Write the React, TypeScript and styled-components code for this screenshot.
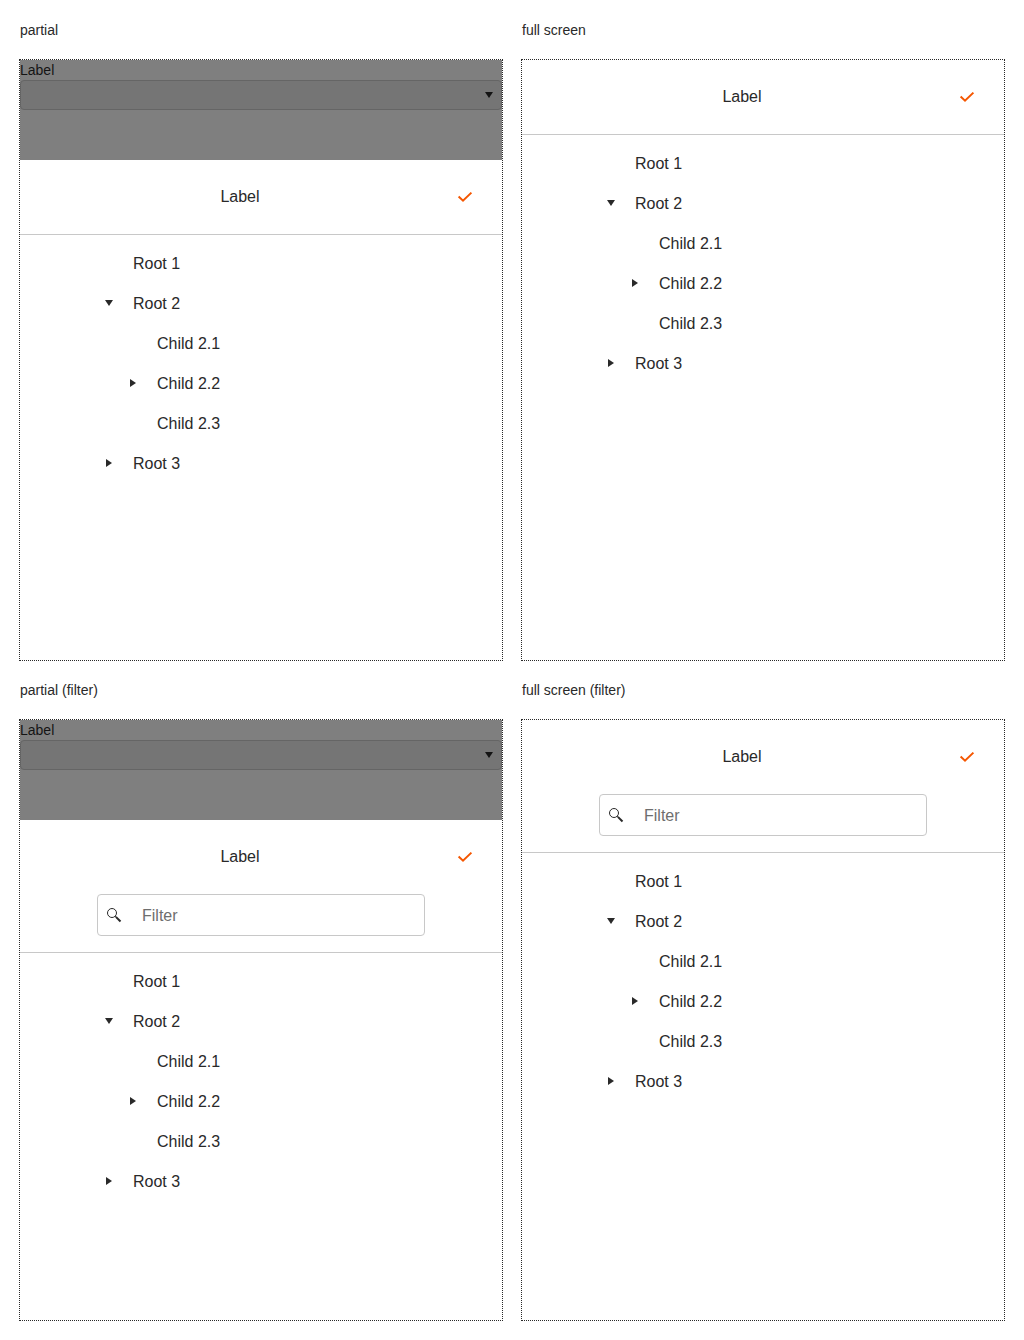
import React from "react";
import styled, { createGlobalStyle } from "styled-components";

const Global = createGlobalStyle`
  * { box-sizing: border-box; }
  body { margin: 0; background: #fff; color: #292929; font-family: "Liberation Sans", Arial, sans-serif; font-size: 14px; line-height: 20px; }
`;

const Page = styled.main`
  display: grid;
  grid-template-columns: 482px 482px;
  column-gap: 20px;
  padding: 20px;
`;

const Story = styled.section`
  height: 660px;
`;

const Title = styled.div`
  height: 20px;
  margin-bottom: 20px;
`;

const Frame = styled.div`
  display: flex;
  flex-direction: column;
  height: 600px;
  outline: 1px dotted #292929;
`;

const Backdrop = styled.div`
  height: 100px;
  flex: none;
  background: #7f7f7f;
  color: #141414;
`;

const Picker = styled.div`
  display: flex;
  align-items: center;
  justify-content: flex-end;
  height: 30px;
  padding-right: 8px;
  border: 1px solid #656565;
  border-radius: 4px;
  background: #757575;
`;

const Header = styled.header`
  flex: none;
  border-bottom: 1px solid #c8c8c8;
`;

const TitleBar = styled.div`
  display: grid;
  grid-template-columns: 1fr 42px;
  align-items: center;
  height: 74px;
  padding: 0 16px;
  font-size: 16px;
  text-align: center;
`;

const Confirm = styled.button`
  display: flex;
  align-items: center;
  justify-content: center;
  width: 42px;
  height: 42px;
  padding: 0;
  border: 0;
  background: none;
`;

const Heading = styled.span`
  line-height: 20px;
`;

const FilterBox = styled.label`
  display: flex;
  align-items: center;
  width: 328px;
  height: 42px;
  margin: 0 auto 16px;
  padding: 0 8px;
  border: 1px solid #c8c8c8;
  border-radius: 4px;
  color: #6e6e6e;
  font-size: 16px;
`;

const FilterText = styled.span`
  margin-left: 20px;
  padding-top: 2px;
`;

const Tree = styled.ul`
  margin: 0;
  padding: 9px 0 0 77px;
  list-style: none;
`;

const Row = styled.li<{ $level: number }>`
  display: flex;
  align-items: center;
  height: 40px;
  padding-left: ${(p) => p.$level * 24}px;
  font-size: 16px;
`;

const Toggle = styled.span`
  display: flex;
  justify-content: center;
  width: 24px;
  margin-right: 12px;
  padding-bottom: 2px;
`;

const Arrow = ({ open }: { open?: boolean }) => (
  <svg width="8" height="8" viewBox="0 0 8 8" fill="currentColor">
    <path d={open ? "M0 1h8L4 7z" : "M1 0l6 4-6 4z"} />
  </svg>
);

const Check = () => (
  <svg width="16" height="16" viewBox="0 0 16 16" fill="none" stroke="#f55600" strokeWidth="2">
    <path d="M1.6 7.6L6 11.7 14.4 3.6" />
  </svg>
);

const Search = () => (
  <svg width="16" height="16" viewBox="0 0 16 16" fill="none" stroke="#292929">
    <circle cx="6" cy="6" r="4.5" />
    <path d="M9.2 9.2L10.5 10.5" />
    <path d="M9.9 9.9L14.5 14.5" strokeWidth="2" />
  </svg>
);

type Node = { label: string; level: number; open?: boolean };

const nodes: Node[] = [
  { label: "Root 1", level: 0 },
  { label: "Root 2", level: 0, open: true },
  { label: "Child 2.1", level: 1 },
  { label: "Child 2.2", level: 1, open: false },
  { label: "Child 2.3", level: 1 },
  { label: "Root 3", level: 0, open: false },
];

const Example = ({ title, partial, filter }: { title: string; partial?: boolean; filter?: boolean }) => (
  <Story>
    <Title>{title}</Title>
    <Frame>
      {partial && (
        <Backdrop>
          <div>Label</div>
          <Picker><Arrow open /></Picker>
        </Backdrop>
      )}
      <Header>
        <TitleBar>
          <Heading>Label</Heading>
          <Confirm aria-label="Confirm"><Check /></Confirm>
        </TitleBar>
        {filter && <FilterBox><Search /><FilterText>Filter</FilterText></FilterBox>}
      </Header>
      <Tree>
        {nodes.map((n) => (
          <Row key={n.label} $level={n.level}>
            <Toggle>{n.open !== undefined && <Arrow open={n.open} />}</Toggle>
            {n.label}
          </Row>
        ))}
      </Tree>
    </Frame>
  </Story>
);

export default function App() {
  return (
    <>
      <Global />
      <Page>
        <Example title="partial" partial />
        <Example title="full screen" />
        <Example title="partial (filter)" partial filter />
        <Example title="full screen (filter)" filter />
      </Page>
    </>
  );
}
